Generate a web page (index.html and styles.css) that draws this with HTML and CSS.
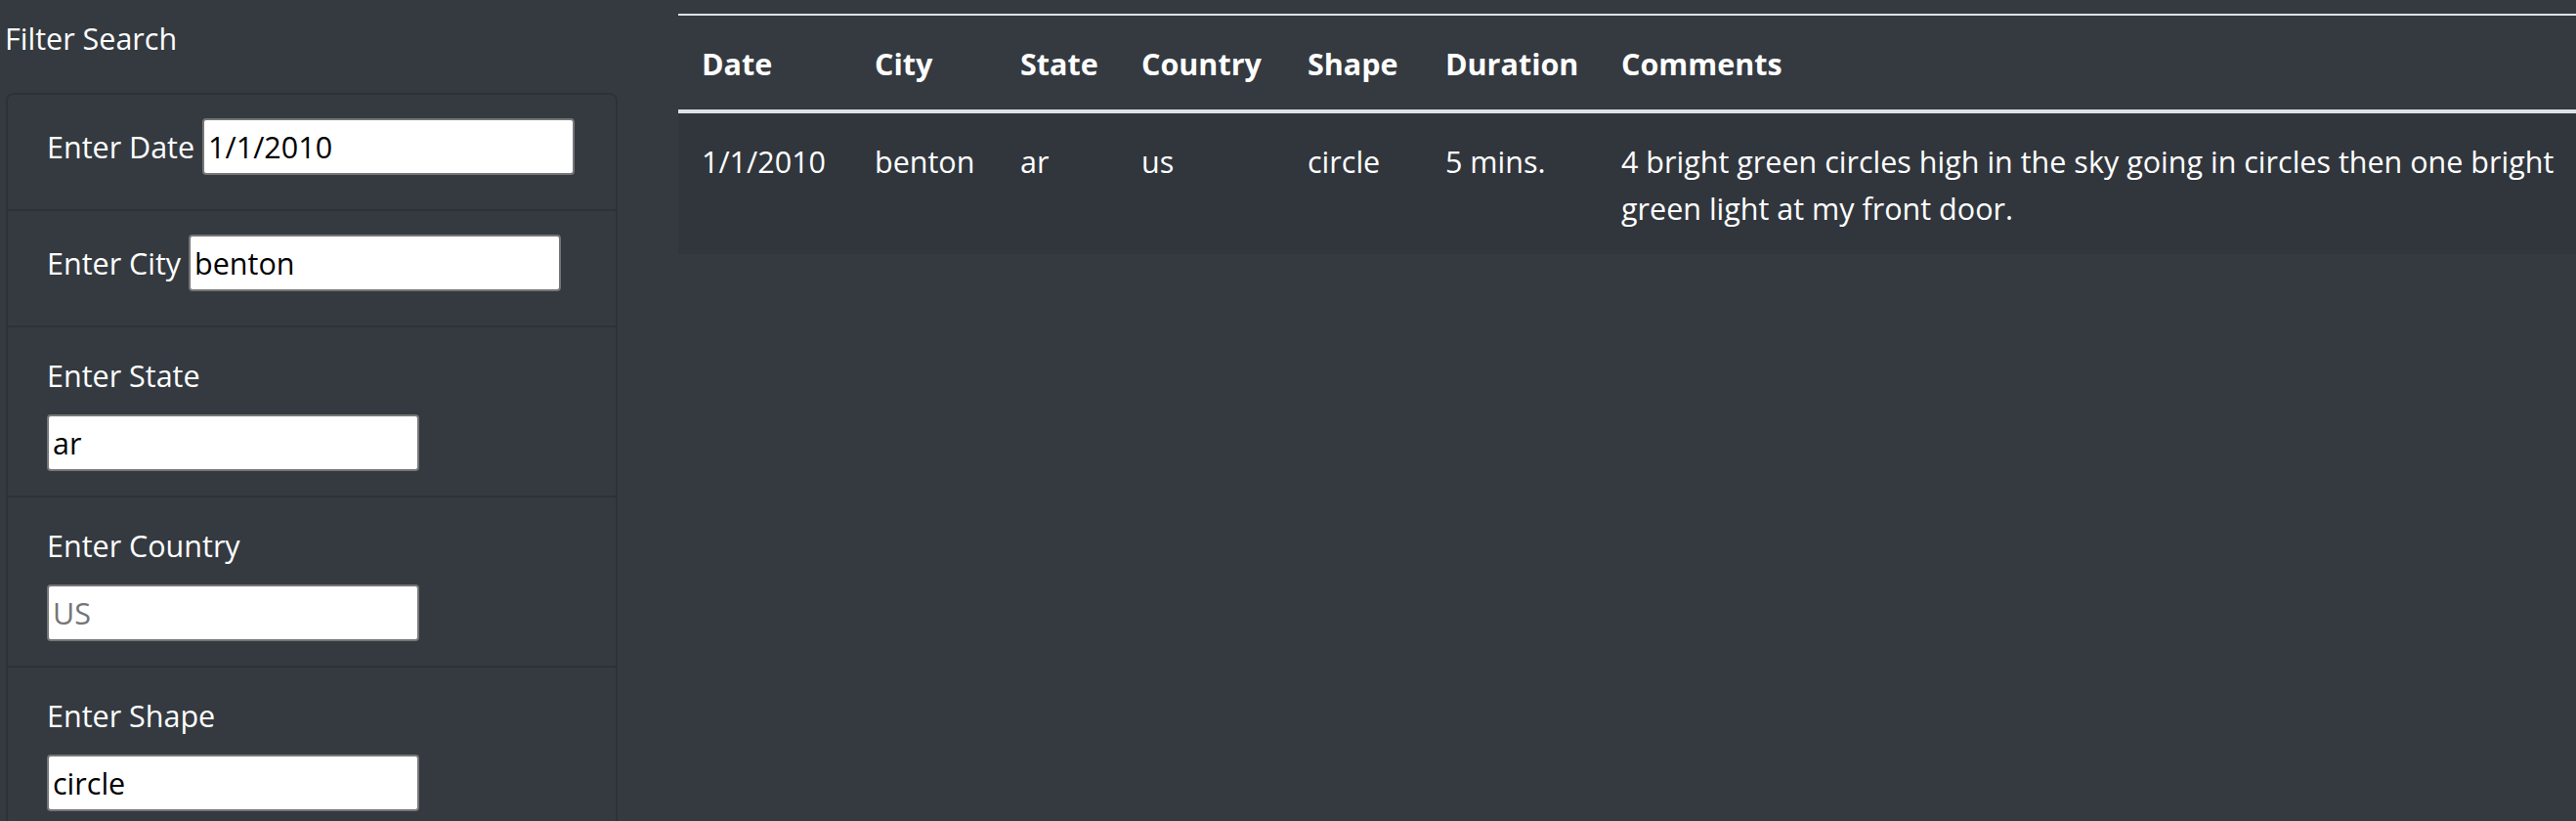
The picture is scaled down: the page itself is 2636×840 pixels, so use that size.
FILE: index.html
```html
<!DOCTYPE html>
<html lang="en">
<head>
<meta charset="utf-8">
<title>UFO Sightings</title>
<link rel="stylesheet" href="styles.css">
</head>
<body>
<div class="page">
  <aside class="sidebar">
    <div class="sidebar-title">Filter Search</div>
    <ul class="filters">
      <li class="filter-item">
        <label class="filter-label" for="datetime">Enter Date</label>
        <input class="filter-input" id="datetime" type="text" value="1/1/2010">
      </li>
      <li class="filter-item">
        <label class="filter-label" for="city">Enter City</label>
        <input class="filter-input" id="city" type="text" value="benton">
      </li>
      <li class="filter-item filter-item--stacked">
        <label class="filter-label" for="state">Enter State</label>
        <input class="filter-input" id="state" type="text" value="ar">
      </li>
      <li class="filter-item filter-item--stacked">
        <label class="filter-label" for="country">Enter Country</label>
        <input class="filter-input" id="country" type="text" placeholder="US">
      </li>
      <li class="filter-item filter-item--stacked">
        <label class="filter-label" for="shape">Enter Shape</label>
        <input class="filter-input" id="shape" type="text" value="circle">
      </li>
    </ul>
  </aside>
  <main class="results">
    <table class="ufo-table">
      <colgroup>
        <col class="col-date">
        <col class="col-city">
        <col class="col-state">
        <col class="col-country">
        <col class="col-shape">
        <col class="col-duration">
        <col class="col-comments">
      </colgroup>
      <thead>
        <tr>
          <th>Date</th>
          <th>City</th>
          <th>State</th>
          <th>Country</th>
          <th>Shape</th>
          <th>Duration</th>
          <th>Comments</th>
        </tr>
      </thead>
      <tbody>
        <tr class="row-odd">
          <td>1/1/2010</td>
          <td>benton</td>
          <td>ar</td>
          <td>us</td>
          <td>circle</td>
          <td>5 mins.</td>
          <td>4 bright green circles high in the sky going in circles then one bright green light at my front door.</td>
        </tr>
      </tbody>
    </table>
  </main>
</div>
</body>
</html>
```
FILE: styles.css
```css
html, body {
  margin: 0;
  padding: 0;
}

body {
  background: #343a40;
  color: #ffffff;
  font-family: "Open Sans", "Noto Sans", sans-serif;
  font-size: 30.5px;
  line-height: 48px;
  overflow: hidden;
}

.page {
  display: flex;
  align-items: flex-start;
  padding-top: 14px;
  width: 2660px;
}

.sidebar {
  flex: none;
  width: 626px;
  margin-left: 6px;
}

.sidebar-title {
  margin-left: -1px;
  padding-top: 1px;
  margin-bottom: 32px;
}

.filters {
  list-style: none;
  margin: 0;
  padding: 0;
  border: 2px solid rgba(0, 0, 0, 0.13);
  border-radius: 8px;
}

.filter-item {
  padding: 24px 40px;
  border-top: 2px solid rgba(0, 0, 0, 0.13);
}

.filter-item:first-child {
  border-top: none;
}

.filter-item--stacked {
  padding-bottom: 25px;
}

.filter-label {
  display: inline-block;
  margin-bottom: 16px;
}

.filter-item--stacked .filter-label {
  display: block;
  padding-top: 1px;
  margin-bottom: 16px;
}

.filter-input {
  box-sizing: border-box;
  width: 381px;
  height: 58px;
  margin: 0;
  padding: 0 4px;
  border: 2px solid #767676;
  border-radius: 4px;
  background: #ffffff;
  color: #000000;
  font-family: inherit;
  font-size: 30.5px;
  line-height: 48px;
}

.filter-input::placeholder {
  color: #757575;
  opacity: 1;
}

.results {
  flex: none;
  width: 1960px;
  margin-left: 62px;
}

.ufo-table {
  width: 100%;
  table-layout: fixed;
  border-collapse: separate;
  border-spacing: 0;
  color: #ffffff;
}

.col-date { width: 177px; }
.col-city { width: 149px; }
.col-state { width: 124px; }
.col-country { width: 170px; }
.col-shape { width: 141px; }
.col-duration { width: 180px; }

.ufo-table th,
.ufo-table td {
  padding: 25px 24px 23px;
  text-align: left;
  vertical-align: top;
}

.ufo-table th {
  font-weight: 700;
  vertical-align: bottom;
  border-top: 2px solid #dee2e6;
  border-bottom: 4px solid #dee2e6;
}

.row-odd {
  background: #31363d;
}
```
